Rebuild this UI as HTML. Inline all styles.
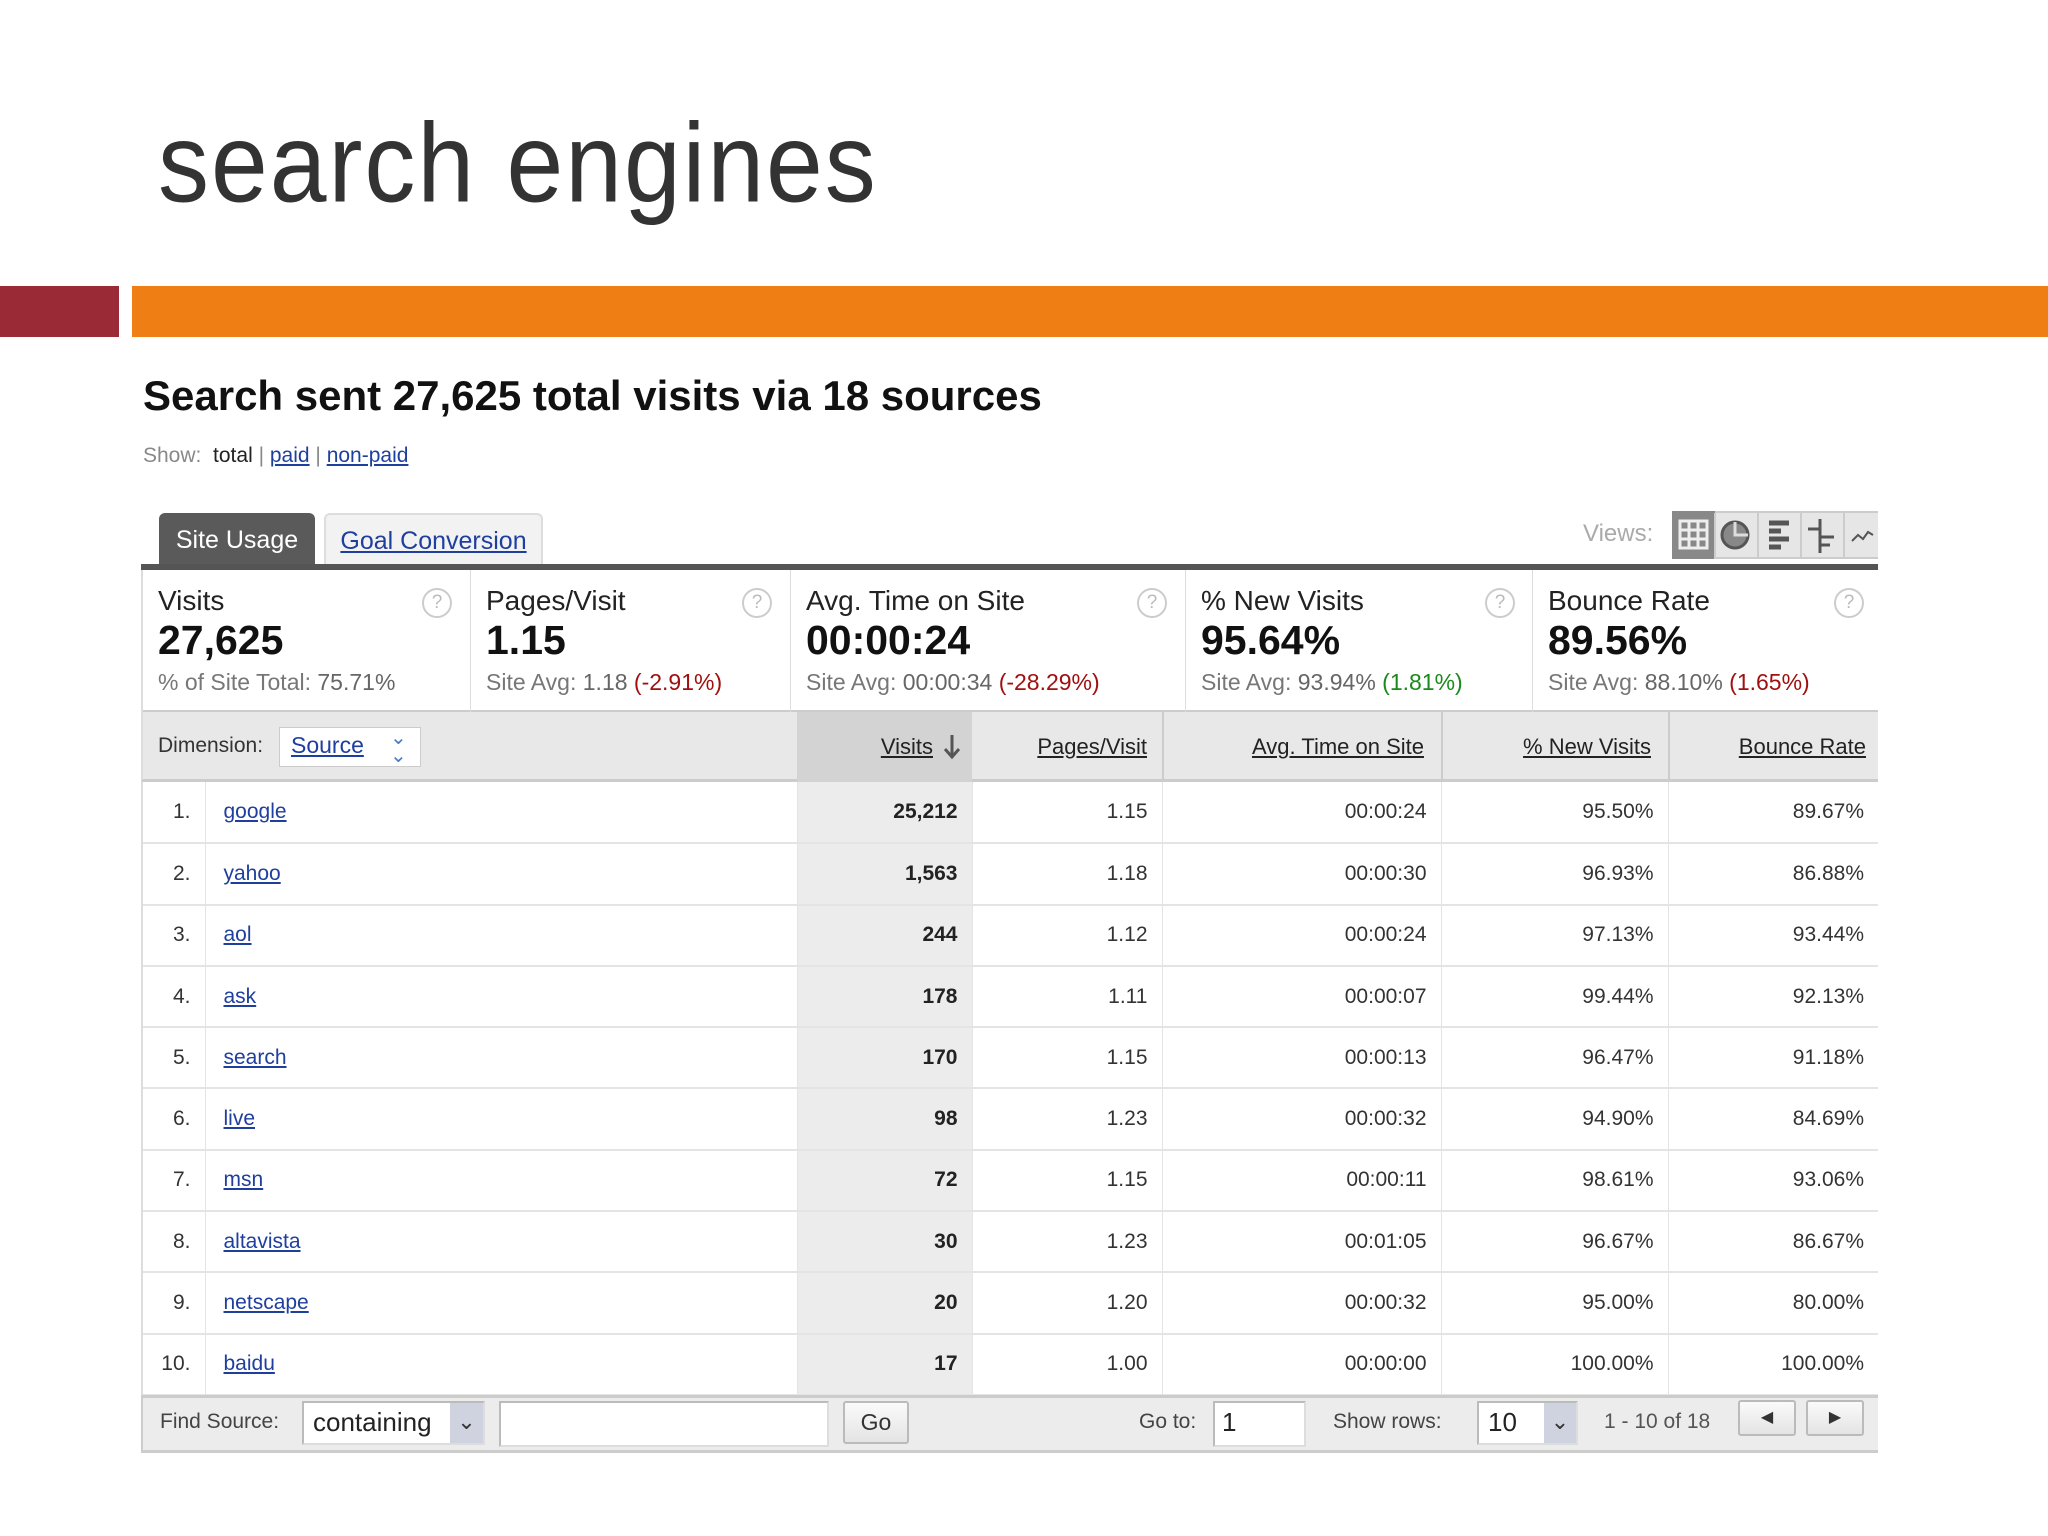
<!DOCTYPE html>
<html><head><meta charset="utf-8"><style>
*{margin:0;padding:0;box-sizing:border-box}
body{width:2048px;height:1536px;background:#fff;position:relative;overflow:hidden;font-family:"Liberation Sans",Arial,sans-serif}
.a{position:absolute;white-space:nowrap}
a,.lk{color:#1f3f9e;text-decoration:underline}
.q{position:absolute;width:30px;height:30px;border:2px solid #ccc;border-radius:50%;color:#bbb;font-size:19px;text-align:center;line-height:26px}
.ml{font-size:28px;color:#222}
.mv{font-size:41px;font-weight:bold;color:#111}
.ms{font-size:23px;color:#777}
.ms b{color:#666;font-weight:normal}
table{position:absolute;left:141px;top:782px;border-collapse:collapse;table-layout:fixed;width:1737px}
td{height:61.3px;border-bottom:2px solid #e4e4e4;border-right:1px solid #e4e4e4;font-size:21px;color:#333;text-align:right;padding-right:14px}
td.v{background:#ececec;font-weight:bold;color:#222}
td.s{text-align:left;padding-left:18px}
td.s a{color:#1f3f9e}
tr td:last-child{border-right:none}
.hd{font-size:22px;color:#222;text-decoration:underline}
.box{position:absolute;background:#fff;border:2px solid #bbb;border-right-color:#ddd;border-bottom-color:#ddd}
.btn{position:absolute;background:linear-gradient(#fafafa,#e4e4e4);border:2px solid #bbb;border-radius:3px;text-align:center;color:#333}
</style></head><body>
<div class="a" style="left:158px;top:107px;font-size:102px;line-height:1;color:#333;transform:scaleY(1.1);transform-origin:left top;letter-spacing:2px">search engines</div>
<div class="a" style="left:0;top:286px;width:119px;height:51px;background:#9a2a36"></div>
<div class="a" style="left:132px;top:286px;width:1916px;height:51px;background:#ef7f14"></div>

<div class="a" style="left:143px;top:372px;font-size:42px;font-weight:bold;color:#111">Search sent 27,625 total visits via 18 sources</div>
<div class="a" style="left:143px;top:444px;font-size:21px;color:#888">Show: &nbsp;<span style="color:#222">total</span> | <a>paid</a> | <a>non-paid</a></div>

<div class="a" style="left:159px;top:513px;width:156px;height:52px;background:#5a5a5a;border-radius:6px 6px 0 0;color:#fff;font-size:25px;text-align:center;line-height:54px">Site Usage</div>
<div class="a" style="left:324px;top:513px;width:219px;height:52px;background:#f2f2f2;border:2px solid #ddd;border-bottom:none;border-radius:6px 6px 0 0;font-size:25px;text-align:center;line-height:52px"><a>Goal Conversion</a></div>
<div class="a" style="left:1583px;top:520px;font-size:24px;color:#aaa">Views:</div>
<div class="a" style="left:1672px;top:511px;width:206px;height:48px;background:#e6e6e6;border:2px solid #ccc;border-right:none"></div>
<div class="a" style="left:1672px;top:511px;width:43px;height:48px;background:#888"></div>
<svg class="a" style="left:1672px;top:511px" width="206" height="48" fill="none" stroke="#555" stroke-width="3">
<rect x="8" y="10" width="27" height="27" stroke="#eee"/><path d="M17 10v27M26 10v27M8 19h27M8 28h27" stroke="#eee"/>
<path d="M43 2v46M86 2v46M129 2v46M172 2v46" stroke="#ccc" stroke-width="2"/>
<circle cx="63" cy="24" r="13" fill="#888" stroke="#555"/><path d="M63 11v13h13" stroke="#ddd"/>
<path d="M97 12h20M97 20h12M97 28h20M97 36h12" stroke-width="5"/>
<path d="M148 8v34M136 18h12M148 26h14M148 34h10" stroke-width="3"/>
<path d="M180 30l6-6 5 4 5-7 5 3" stroke-width="2"/></svg>
<div class="a" style="left:141px;top:564px;width:1737px;height:6px;background:#555"></div>

<div class="a" style="left:141px;top:570px;width:1737px;height:142px;border-bottom:2px solid #ccc"></div>
<div class="a" style="left:470px;top:570px;width:1px;height:142px;background:#ddd"></div>
<div class="a" style="left:790px;top:570px;width:1px;height:142px;background:#ddd"></div>
<div class="a" style="left:1185px;top:570px;width:1px;height:142px;background:#ddd"></div>
<div class="a" style="left:1532px;top:570px;width:1px;height:142px;background:#ddd"></div>
<div class="a" style="left:141px;top:570px;width:2px;height:142px;background:#ddd"></div>

<div class="a ml" style="left:158px;top:585px">Visits</div>
<div class="a mv" style="left:158px;top:617px">27,625</div>
<div class="a ms" style="left:158px;top:669px">% of Site Total: <b>75.71%</b></div>
<div class="q" style="left:422px;top:588px">?</div>
<div class="a ml" style="left:486px;top:585px">Pages/Visit</div>
<div class="a mv" style="left:486px;top:617px">1.15</div>
<div class="a ms" style="left:486px;top:669px">Site Avg: <b>1.18</b> <span style="color:#a01010">(-2.91%)</span></div>
<div class="q" style="left:742px;top:588px">?</div>
<div class="a ml" style="left:806px;top:585px">Avg. Time on Site</div>
<div class="a mv" style="left:806px;top:617px">00:00:24</div>
<div class="a ms" style="left:806px;top:669px">Site Avg: <b>00:00:34</b> <span style="color:#a01010">(-28.29%)</span></div>
<div class="q" style="left:1137px;top:588px">?</div>
<div class="a ml" style="left:1201px;top:585px">% New Visits</div>
<div class="a mv" style="left:1201px;top:617px">95.64%</div>
<div class="a ms" style="left:1201px;top:669px">Site Avg: <b>93.94%</b> <span style="color:#1a8a1a">(1.81%)</span></div>
<div class="q" style="left:1485px;top:588px">?</div>
<div class="a ml" style="left:1548px;top:585px">Bounce Rate</div>
<div class="a mv" style="left:1548px;top:617px">89.56%</div>
<div class="a ms" style="left:1548px;top:669px">Site Avg: <b>88.10%</b> <span style="color:#a01010">(1.65%)</span></div>
<div class="q" style="left:1834px;top:588px">?</div>

<div class="a" style="left:141px;top:712px;width:1737px;height:70px;background:#e8e8e8;border-bottom:3px solid #ccc;border-left:2px solid #ddd"></div>
<div class="a" style="left:797px;top:712px;width:175px;height:70px;background:#d3d3d3"></div>
<div class="a" style="left:1162px;top:712px;width:2px;height:70px;background:#ccc"></div>
<div class="a" style="left:1441px;top:712px;width:2px;height:70px;background:#ccc"></div>
<div class="a" style="left:1668px;top:712px;width:2px;height:70px;background:#ccc"></div>
<div class="a" style="left:158px;top:734px;font-size:21px;color:#333">Dimension:</div>
<div class="a" style="left:279px;top:727px;width:142px;height:40px;background:#fff;border:1px solid #ccc"></div>
<div class="a" style="left:291px;top:732px;font-size:23px"><a>Source</a></div>
<div class="a" style="left:390px;top:729px;font-size:20px;color:#4a7ac8;line-height:18px">⌄<br>⌄</div>
<div class="a hd" style="right:1115px;top:734px">Visits</div>
<svg class="a" style="left:942px;top:733px" width="20" height="28" stroke="#555" stroke-width="3" fill="none"><path d="M10 2v22M3 16l7 8 7-8"/></svg>
<div class="a hd" style="right:901px;top:734px">Pages/Visit</div>
<div class="a hd" style="right:624px;top:734px">Avg. Time on Site</div>
<div class="a hd" style="right:397px;top:734px">% New Visits</div>
<div class="a hd" style="right:182px;top:734px">Bounce Rate</div>

<table>
<colgroup><col style="width:64px"><col style="width:592px"><col style="width:175px"><col style="width:190px"><col style="width:279px"><col style="width:227px"><col style="width:210px"></colgroup>
<tr><td>1.</td><td class="s"><a>google</a></td><td class="v">25,212</td><td>1.15</td><td>00:00:24</td><td>95.50%</td><td>89.67%</td></tr>
<tr><td>2.</td><td class="s"><a>yahoo</a></td><td class="v">1,563</td><td>1.18</td><td>00:00:30</td><td>96.93%</td><td>86.88%</td></tr>
<tr><td>3.</td><td class="s"><a>aol</a></td><td class="v">244</td><td>1.12</td><td>00:00:24</td><td>97.13%</td><td>93.44%</td></tr>
<tr><td>4.</td><td class="s"><a>ask</a></td><td class="v">178</td><td>1.11</td><td>00:00:07</td><td>99.44%</td><td>92.13%</td></tr>
<tr><td>5.</td><td class="s"><a>search</a></td><td class="v">170</td><td>1.15</td><td>00:00:13</td><td>96.47%</td><td>91.18%</td></tr>
<tr><td>6.</td><td class="s"><a>live</a></td><td class="v">98</td><td>1.23</td><td>00:00:32</td><td>94.90%</td><td>84.69%</td></tr>
<tr><td>7.</td><td class="s"><a>msn</a></td><td class="v">72</td><td>1.15</td><td>00:00:11</td><td>98.61%</td><td>93.06%</td></tr>
<tr><td>8.</td><td class="s"><a>altavista</a></td><td class="v">30</td><td>1.23</td><td>00:01:05</td><td>96.67%</td><td>86.67%</td></tr>
<tr><td>9.</td><td class="s"><a>netscape</a></td><td class="v">20</td><td>1.20</td><td>00:00:32</td><td>95.00%</td><td>80.00%</td></tr>
<tr><td>10.</td><td class="s"><a>baidu</a></td><td class="v">17</td><td>1.00</td><td>00:00:00</td><td>100.00%</td><td>100.00%</td></tr>
</table>
<div class="a" style="left:141px;top:782px;width:2px;height:613px;background:#ddd"></div>

<div class="a" style="left:141px;top:1395px;width:1737px;height:58px;background:#ececec;border-top:3px solid #ccc;border-bottom:3px solid #ccc;border-left:2px solid #ccc"></div>
<div class="a" style="left:160px;top:1410px;font-size:21px;color:#444">Find Source:</div>
<div class="box" style="left:302px;top:1401px;width:183px;height:44px"></div>
<div class="a" style="left:313px;top:1407px;font-size:26px;color:#222">containing</div>
<div class="a" style="left:450px;top:1403px;width:33px;height:40px;background:#cfd3df;color:#333;font-size:22px;text-align:center;line-height:38px">⌄</div>
<div class="box" style="left:499px;top:1401px;width:330px;height:46px"></div>
<div class="btn" style="left:843px;top:1401px;width:66px;height:43px;font-size:23px;line-height:39px">Go</div>
<div class="a" style="left:1139px;top:1410px;font-size:21px;color:#444">Go to:</div>
<div class="box" style="left:1213px;top:1401px;width:93px;height:46px"></div>
<div class="a" style="left:1222px;top:1407px;font-size:26px;color:#222">1</div>
<div class="a" style="left:1333px;top:1410px;font-size:21px;color:#444">Show rows:</div>
<div class="box" style="left:1477px;top:1401px;width:101px;height:44px"></div>
<div class="a" style="left:1488px;top:1407px;font-size:26px;color:#222">10</div>
<div class="a" style="left:1544px;top:1403px;width:32px;height:40px;background:#cfd3df;color:#333;font-size:22px;text-align:center;line-height:38px">⌄</div>
<div class="a" style="left:1604px;top:1410px;font-size:21px;color:#555">1 - 10 of 18</div>
<div class="btn" style="left:1738px;top:1400px;width:58px;height:36px;font-size:16px;line-height:32px">◀</div>
<div class="btn" style="left:1806px;top:1400px;width:58px;height:36px;font-size:16px;line-height:32px">▶</div>
</body></html>
